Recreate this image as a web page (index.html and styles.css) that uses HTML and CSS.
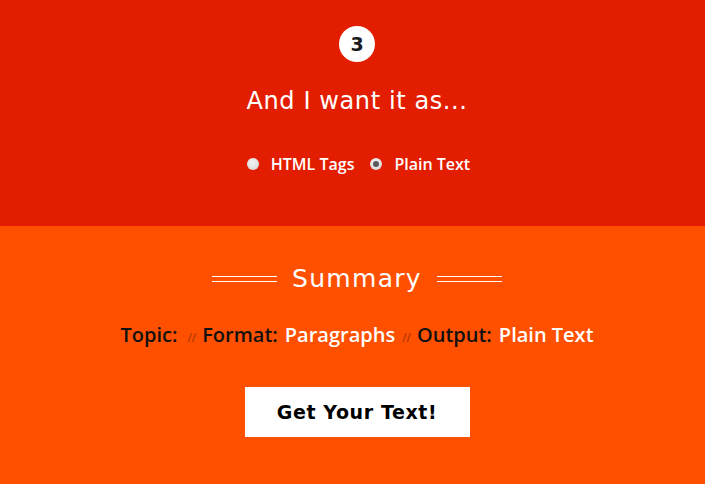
FILE: index.html
```html
<!DOCTYPE html>
<html>
<head>
<meta charset="utf-8">
<link rel="stylesheet" href="styles.css">
</head>
<body>
<section class="step">
  <div class="badge">3</div>
  <h2 class="step-title">And I want it as...</h2>
  <div class="options">
    <label class="option"><span class="radio"></span>HTML Tags</label>
    <label class="option"><span class="radio checked"></span>Plain Text</label>
  </div>
</section>
<section class="summary">
  <div class="summary-head">
    <span class="rule"></span>
    <h2 class="summary-title">Summary</h2>
    <span class="rule"></span>
  </div>
  <p class="summary-line">
    <span class="key">Topic:</span><span class="val"></span>
    <span class="sep">//</span>
    <span class="key">Format:</span><span class="val">Paragraphs</span>
    <span class="sep">//</span>
    <span class="key">Output:</span><span class="val">Plain Text</span>
  </p>
  <button class="cta">Get Your Text!</button>
</section>
</body>
</html>
```
FILE: styles.css
```css
html, body { margin: 0; padding: 0; }
body { width: 705px; height: 484px; overflow: hidden; font-family: "Open Sans", sans-serif; }

.step {
  background: #e31e00;
  height: 226px;
  box-sizing: border-box;
  padding-top: 26px;
  padding-left: 9px;
  display: flex;
  flex-direction: column;
  align-items: center;
}
.badge {
  width: 36px; height: 36px; border-radius: 50%;
  background: #fff; color: #1a1a1a;
  display: flex; align-items: center; justify-content: center;
  font-family: "DejaVu Sans", sans-serif; font-weight: bold; font-size: 19px;
}
.step-title {
  margin: 24px 0 0;
  color: #fff;
  font-family: "DejaVu Sans", sans-serif;
  font-weight: normal;
  font-size: 24px;
  line-height: 30px;
  letter-spacing: 0.6px;
}
.options {
  margin-top: 37px;
  display: flex;
  gap: 16px;
  color: #fff;
  font-weight: 600;
  font-size: 16px;
  line-height: 22px;
  padding-left: 3px;
}
.option { display: flex; align-items: center; }
.radio {
  width: 12px; height: 12px; border-radius: 50%;
  background: radial-gradient(circle at 45% 40%, #f4f4f4 0%, #dcdcdc 70%, #c4c4c4 100%);
  margin-right: 12px;
  position: relative;
}
.radio.checked::after {
  content: "";
  position: absolute;
  left: 3px; top: 3px;
  width: 6px; height: 6px; border-radius: 50%;
  background: #5a5a5a;
}

.summary {
  background: #ff5000;
  height: 258px;
  box-sizing: border-box;
  padding-top: 38px;
  padding-left: 9px;
  display: flex;
  flex-direction: column;
  align-items: center;
}
.summary-head { display: flex; align-items: center; gap: 15px; }
.rule {
  width: 65px; height: 4px;
  border-top: 1px solid #fff;
  border-bottom: 1px solid #fff;
}
.summary-title {
  margin: 0;
  color: #fff;
  font-family: "DejaVu Sans", sans-serif;
  font-weight: normal;
  font-size: 25px;
  line-height: 30px;
  letter-spacing: 1.3px;
}
.summary-line {
  margin: 27px 0 0;
  font-size: 20px;
  font-weight: 600;
  line-height: 28px;
  color: #111;
  display: flex;
  align-items: baseline;
}
.key { color: #111; }
.val { color: #fff; margin-left: 7px; }
.val:empty { margin-left: 3px; }
.sep { color: #9a3400; font-size: 12px; font-weight: 400; margin: 0 6px 0 7px; }
.cta {
  margin-top: 35px;
  width: 225px; height: 50px;
  background: #fff;
  border: none;
  font-family: "DejaVu Sans", sans-serif;
  font-weight: bold;
  font-size: 19px;
  letter-spacing: 0.6px;
  color: #000;
  padding: 0;
}
```
